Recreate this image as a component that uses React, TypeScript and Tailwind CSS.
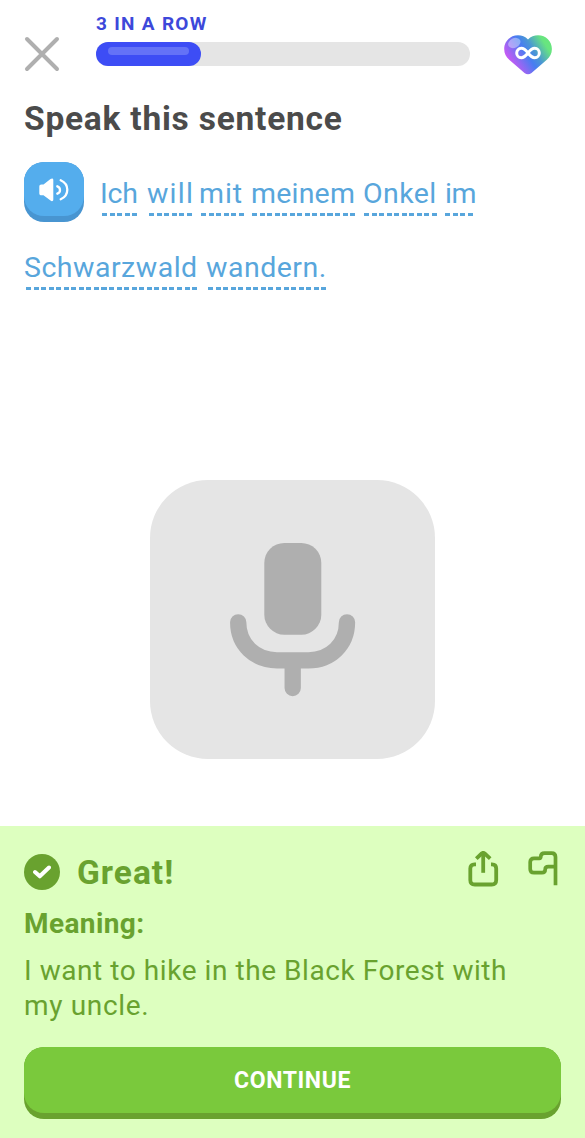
import React from "react";

type Word = { text: string; className: string };

const firstLine: Word[] = [
  { text: "Ich", className: "w-[35px] mr-[12px] tracking-[-0.2px]" },
  { text: "will", className: "w-[43px] mr-[9px] tracking-[1.2px]" },
  { text: "mit", className: "w-[43px] mr-[8px] tracking-[0.9px]" },
  { text: "meinem", className: "w-[103px] mr-[9px] tracking-[0.2px] indent-[1px]" },
  { text: "Onkel", className: "w-[73px] mr-[8px] tracking-[0.4px] indent-[1px]" },
  { text: "im", className: "w-[28px] tracking-[-0.4px] indent-[2px]" },
];

const secondLine: Word[] = [
  { text: "Schwarzwald", className: "w-[171px] mr-[11px] tracking-[0.5px]" },
  { text: "wandern.", className: "w-[119px] tracking-[0.5px]" },
];

function HintWord({ text, className }: Word) {
  return (
    <span className={`flex shrink-0 flex-col whitespace-nowrap ${className}`}>
      <span className="-ml-[2px] h-[36px] text-[28.5px] leading-[36px] text-[#58a6dc]">{text}</span>
      <span className="mt-[1px] h-[3px] w-full bg-[repeating-linear-gradient(to_right,#58a6dc_0_5px,transparent_5px_7.55px)]" />
    </span>
  );
}

function CloseIcon() {
  return (
    <svg width="36" height="36" viewBox="0 0 36 36" fill="none" stroke="#afafaf" strokeWidth="4" strokeLinecap="round">
      <path d="M3 3L33 33M33 3L3 33" />
    </svg>
  );
}

function HeartIcon() {
  return (
    <svg width="48" height="40" viewBox="0 0 48 40" fill="none">
      <defs>
        <linearGradient id="heart" x1="5" y1="29" x2="40" y2="7" gradientUnits="userSpaceOnUse">
          <stop offset="0" stopColor="#d455f5" />
          <stop offset="0.2" stopColor="#9d65f3" />
          <stop offset="0.5" stopColor="#477df1" />
          <stop offset="0.68" stopColor="#4a96d5" />
          <stop offset="1" stopColor="#68e57f" />
        </linearGradient>
      </defs>
      <path
        d="M24 4.6C21.3 1.6 17.8.3 14 .3C6.2.3.2 6.300.2 14C.2 18.600 2 21.800 5.200 24.800L20.500 38C22.700 39.800 25.300 39.800 27.500 38L42.800 24.800C46 21.800 47.900 18.600 47.900 14C47.900 6.300 41.900.3 34.100.3C30.200.3 26.700 1.600 24 4.600Z"
        fill="url(#heart)"
      />
      <ellipse cx="10.300" cy="8" rx="6.500" ry="4.700" transform="rotate(-28 10.300 8)" fill="#fff" fillOpacity="0.38" />
      <path
        d="M24 18C21.500 14.700 20 13.300 17.300 13.300C14.600 13.300 12.700 15.400 12.700 18C12.700 20.600 14.600 22.700 17.300 22.700C20 22.700 21.500 21.300 24 18C26.500 14.700 28 13.300 30.700 13.300C33.400 13.300 35.300 15.400 35.300 18C35.300 20.600 33.400 22.700 30.700 22.700C28 22.700 26.500 21.300 24 18Z"
        stroke="#fff"
        strokeWidth="3"
      />
    </svg>
  );
}

function SpeakerIcon() {
  return (
    <svg width="30" height="24" viewBox="0 0 30 24" fill="none">
      <path
        d="M2.500 6.500H4.500L11.500 1.100C13 0 14.300.5 14.300 2V21.500C14.300 23.200 13 23.700 11.500 22.600L4.500 17.300H2.500C1 17.300.3 16.500.3 15.200V8.600C.3 7.300 1 6.500 2.500 6.500Z"
        fill="#fff"
      />
      <path d="M18.300 8.300Q21 9.200 21 12T18.300 15.700" stroke="#fff" strokeWidth="2.300" strokeLinecap="round" />
      <path d="M21.700 2.200Q28.300 5.200 28.300 11.800T21.700 21.300" stroke="#fff" strokeWidth="2.300" strokeLinecap="round" />
    </svg>
  );
}

function MicIcon() {
  return (
    <svg width="126" height="154" viewBox="0 0 126 154" fill="none">
      <rect x="34.300" y="0" width="57" height="91.700" rx="20" fill="#afafaf" />
      <path
        d="M8.200 79.300C8.200 101.500 25 117.300 47 117.300H78.500C100.500 117.300 117 101.500 117 79.300M62.700 117.300V145"
        stroke="#afafaf"
        strokeWidth="16.300"
        strokeLinecap="round"
      />
    </svg>
  );
}

function ShareIcon() {
  return (
    <svg width="31" height="36" viewBox="0 0 31 36" fill="none" stroke="#69a22f" strokeWidth="3.800">
      <path d="M8 13.400H6.500Q2.300 13.400 2.300 17.500V29Q2.300 33.500 6.800 33.500H23.700Q28.200 33.500 28.200 29V17.500Q28.200 13.400 24 13.400H23" />
      <path d="M15.200 21.800V2.500" />
      <path d="M8.300 7.600L13.700 2.500Q15.200 1.200 16.700 2.500L22.200 7.600" />
    </svg>
  );
}

function FlagIcon() {
  return (
    <svg width="30" height="35" viewBox="0 0 30 35" fill="none" stroke="#69a22f" strokeWidth="3.700" strokeLinejoin="round">
      <path d="M27.500 34.200V6Q27.500 2.100 23.600 2.100H16.500Q12.800 2.100 12.800 5.500Q12.800 7.300 11.300 7.300H6Q2.200 7.300 2.200 11V18Q2.200 21.700 6 21.700H14Q17.200 21.700 17.200 18.500Q17.200 15.700 20.300 15.700H27.500" />
    </svg>
  );
}

function CheckBadge() {
  return (
    <span className="flex size-[36px] items-center justify-center rounded-full bg-[#69a22f]">
      <svg width="18" height="14" viewBox="0 0 18 14" fill="none" stroke="#fff" strokeWidth="4" strokeLinecap="round" strokeLinejoin="round">
        <path d="M2 7L6.800 11.300L16 2.500" />
      </svg>
    </span>
  );
}

export default function App() {
  return (
    <div className="flex h-[1138px] w-[585px] flex-col overflow-hidden bg-white font-['Roboto','Liberation_Sans',sans-serif]">
      <header className="flex h-[90px] shrink-0 pl-[24px]">
        <button aria-label="Close" className="mt-[36px] h-[36px] w-[36px]">
          <CloseIcon />
        </button>
        <div className="ml-[36px] w-[374px] pt-[12px]">
          <div className="h-[24px] whitespace-nowrap text-[19px] font-bold leading-[24px] tracking-[1.3px] text-[#3d48da]">3 IN A ROW</div>
          <div className="mt-[6px] h-[24px] rounded-full bg-[#e5e5e5]">
            <div className="h-[24px] w-[105px] rounded-full bg-[#3d4df5] px-[12px] pt-[5px]">
              <div className="h-[8px] rounded-full bg-[#6472f7]" />
            </div>
          </div>
        </div>
        <div className="ml-[34px] mt-[35px]">
          <HeartIcon />
        </div>
      </header>

      <main className="flex grow flex-col">
        <h1 className="mt-[9px] h-[39px] whitespace-nowrap pl-[24px] text-[33.5px] font-bold leading-[40px] tracking-[0.77px] text-[#4b4b4b]">
          Speak this sentence
        </h1>
        <div className="flex h-[92px] pl-[24px] pt-[24px]">
          <button aria-label="Play sentence" className="flex h-[60px] w-[60px] items-start justify-center rounded-[20px] bg-[#4895d1] pb-[6px]">
            <span className="flex h-[54px] w-[60px] items-center justify-center rounded-[20px] bg-[#54aded] pt-[1px]">
              <SpeakerIcon />
            </span>
          </button>
          <div className="ml-[18px] mt-[14px] flex">
            {firstLine.map((word) => <HintWord key={word.text} {...word} />)}
          </div>
        </div>
        <div className="mt-[20px] flex h-[40px] pl-[26px]">
          {secondLine.map((word) => <HintWord key={word.text} {...word} />)}
        </div>
        <button aria-label="Record" className="ml-[150px] mt-[190px] flex h-[279px] w-[285px] items-start justify-center rounded-[58px] bg-[#e5e5e5] pt-[63px]">
          <MicIcon />
        </button>
      </main>

      <footer className="flex h-[312px] shrink-0 flex-col bg-[#ddffbf] px-[24px] text-[#69a22f]">
        <div className="flex h-[64px] items-start pt-[25px]">
          <div className="mt-[3px]"><CheckBadge /></div>
          <h2 className="ml-[17px] mt-[2px] whitespace-nowrap text-[33.5px] font-bold leading-[40px] tracking-[1px]">Great!</h2>
          <div className="ml-auto mr-[3px] flex gap-[29px]">
            <ShareIcon />
            <FlagIcon />
          </div>
        </div>
        <h3 className="mt-[16px] h-[36px] whitespace-nowrap text-[28px] font-bold leading-[36px] tracking-[0.4px]">Meaning:</h3>
        <p className="mt-[11px] h-[70px] whitespace-nowrap text-[28px] leading-[35px]">
          <span className="block tracking-[0.56px]">I want to hike in the Black Forest with</span>
          <span className="block tracking-[0.65px]">my uncle.</span>
        </p>
        <button className="mt-[24px] h-[72px] w-[537px] rounded-[20px] bg-[#69a22f] pb-[6px] text-white">
          <span className="flex h-[66px] items-center justify-center rounded-[20px] bg-[#7ac93c] pt-[2px] text-[23px] font-bold tracking-[0.6px]">CONTINUE</span>
        </button>
      </footer>
    </div>
  );
}
